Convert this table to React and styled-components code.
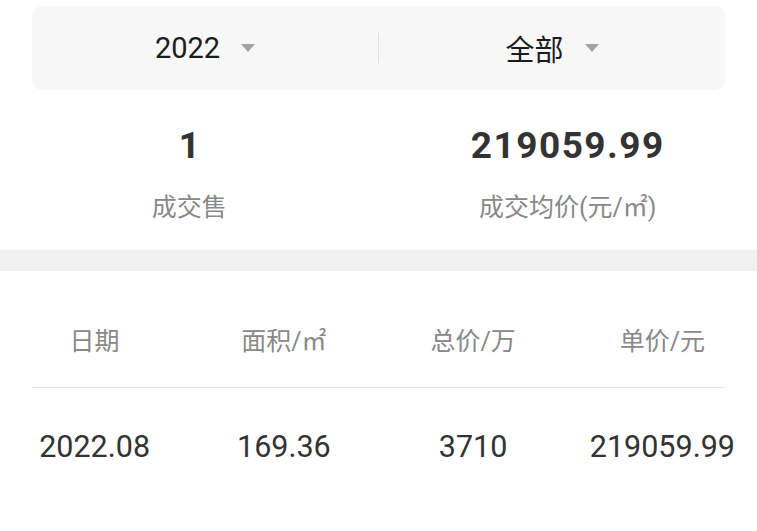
import React from 'react';
import styled, { createGlobalStyle } from 'styled-components';

const GlobalStyle = createGlobalStyle`
    body {
        margin: 0;
        background: #fff;
        font-family: Roboto, 'Noto Sans CJK SC', sans-serif;
    }
`;

const Page = styled.div`
    width: 757px;
    padding-top: 6px;
`;

const FilterBar = styled.div`
    display: flex;
    align-items: center;
    height: 84px;
    margin: 0 32px;
    background: #f7f7f7;
    border-radius: 10px;
`;

const FilterItem = styled.div`
    flex: 1;
    display: flex;
    justify-content: center;
    align-items: center;
    gap: 21px;
    font-size: 29px;
    color: #1c1c1c;
`;

const Caret = styled.span`
    width: 0;
    height: 0;
    border-left: 7px solid transparent;
    border-right: 7px solid transparent;
    border-top: 8px solid #a3a3a3;
`;

const FilterDivider = styled.div`
    width: 1px;
    height: 30px;
    background: #e0e0e0;
`;

const Stats = styled.div`
    display: grid;
    grid-template-columns: 1fr 1fr;
    padding: 36px 0 25px;
`;

const Stat = styled.div`
    display: flex;
    flex-direction: column;
    align-items: center;
`;

const StatValue = styled.div`
    font-size: 37px;
    line-height: 40px;
    font-weight: 700;
    color: #333;
    letter-spacing: ${p => (p.$wide ? '1.5px' : '0')};
`;

const StatLabel = styled.div`
    margin-top: 25px;
    font-size: 25px;
    line-height: 34px;
    color: #888;
`;

const Band = styled.div`
    height: 21px;
    background: #f1f1f1;
`;

const Row = styled.div`
    display: grid;
    grid-template-columns: repeat(4, 1fr);
    padding: ${p => (p.$head ? '54px 0 28px' : '39px 0 0')};
`;

const Cell = styled.div`
    text-align: center;
    font-size: ${p => (p.$head ? '25px' : '30.5px')};
    line-height: ${p => (p.$head ? '34px' : '40px')};
    color: ${p => (p.$head ? '#888' : '#333')};
`;

const Rule = styled.div`
    height: 1px;
    margin: 0 32px;
    background: #e8e8e8;
`;

const COLUMNS = ['日期', '面积/㎡', '总价/万', '单价/元'];
const ROWS = [['2022.08', '169.36', '3710', '219059.99']];

export default function App() {
    return (
        <Page>
            <GlobalStyle />
            <FilterBar>
                <FilterItem>
                    2022
                    <Caret />
                </FilterItem>
                <FilterDivider />
                <FilterItem>
                    全部
                    <Caret />
                </FilterItem>
            </FilterBar>
            <Stats>
                <Stat>
                    <StatValue>1</StatValue>
                    <StatLabel>成交售</StatLabel>
                </Stat>
                <Stat>
                    <StatValue $wide>219059.99</StatValue>
                    <StatLabel>成交均价(元/㎡)</StatLabel>
                </Stat>
            </Stats>
            <Band />
            <Row $head>
                {COLUMNS.map(c => (
                    <Cell $head key={c}>
                        {c}
                    </Cell>
                ))}
            </Row>
            <Rule />
            {ROWS.map(row => (
                <Row key={row[0]}>
                    {row.map((v, i) => (
                        <Cell key={i}>{v}</Cell>
                    ))}
                </Row>
            ))}
        </Page>
    );
}
